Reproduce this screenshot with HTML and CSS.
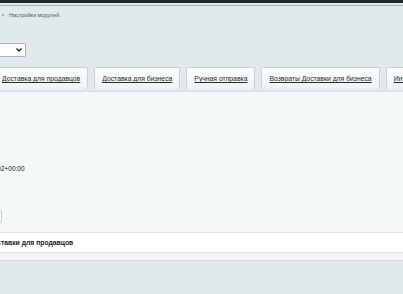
FILE: index.html
```html
<!DOCTYPE html>
<html lang="ru">
<head>
    <meta charset="UTF-8">
    <title>Настройки модулей</title>
    <link rel="stylesheet" href="styles.css">
</head>
<body>

<div class="topbar"></div>
<div class="topline"></div>

<div class="page">
    <!-- breadcrumbs -->
    <div class="crumbs">
        <span class="dot"></span>
        <a href="#">Настройки модулей</a>
    </div>

    <!-- module select -->
    <div class="select-box">
        <span class="select-val">Доставка</span>
        <svg class="chev" width="6" height="4" viewBox="0 0 6 4"><path d="M0.5 0.5 L3 3 L5.5 0.5" fill="none" stroke="#222" stroke-width="1.4"/></svg>
    </div>

    <!-- tabs -->
    <div class="tabs">
        <div class="tab first"><a href="#">Доставка для продавцов</a></div>
        <div class="tab"><a href="#">Доставка для бизнеса</a></div>
        <div class="tab"><a href="#">Ручная отправка</a></div>
        <div class="tab"><a href="#">Возвраты Доставки для бизнеса</a></div>
        <div class="tab"><a href="#">Интеграция</a></div>
    </div>

    <div class="panel">
        <div class="value">2024-06-18T09:41:02+00:00</div>
        <div class="btn-row"><span class="btn">Сохранить</span></div>
        <div class="section">Настройки доставки для продавцов</div>
        <div class="panel-foot"></div>
    </div>
</div>

</body>
</html>
```

FILE: styles.css
```css
body {
    font-family: "Liberation Sans", Arial, sans-serif;
    background: #e1e9eb;
    color: #222;
    margin: 0;
    padding: 0;
    overflow: hidden;
}
.topbar {
    height: 3px;
    background: #1d2a30;
}
.topline {
    height: 1px;
    margin-top: 2px;
    background: #a3acaf;
}
.page {
    padding-top: 5px;
}
.crumbs {
    font-size: 5.5px;
    height: 8px;
    line-height: 8px;
    display: flex;
    align-items: center;
    gap: 5px;
    padding-left: 2px;
}
.crumbs a {
    color: #3f5b70;
    text-decoration: none;
}
.dot {
    width: 2px;
    height: 2px;
    border-radius: 1px;
    background: #8aa0ad;
}
.select-box {
    margin-top: 24px;
    margin-left: -46px;
    width: 63px;
    height: 12px;
    background: #fff;
    border: 1px solid #a8b4b8;
    border-radius: 2px;
    display: flex;
    align-items: center;
    justify-content: space-between;
    padding: 0 3px 0 4px;
    box-sizing: content-box;
    font-size: 7px;
}
.chev {
    display: block;
}
.tabs {
    display: flex;
    gap: 6px;
    margin-top: 10px;
    margin-left: -6px;
    white-space: nowrap;
}
.tab {
    height: 21px;
    padding: 0 7px;
    background: linear-gradient(#fbfcfc, #eef2f3);
    border: 1px solid #c9d2d5;
    border-bottom: none;
    border-radius: 2px 2px 0 0;
    font-size: 6.8px;
    line-height: 21px;
    flex-shrink: 0;
}
.tab a {
    color: #2a2a2a;
}
.panel {
    margin-top: 2px;
    background: #f4f8f8;
    border-top: 1px solid #d7e0e2;
    height: 169px;
    display: flex;
    flex-direction: column;
}
.value {
    font-size: 6.5px;
    margin-top: 73px;
    margin-left: -58px;
    white-space: nowrap;
}
.btn-row {
    margin-top: 30px;
    margin-left: -60px;
}
.btn {
    display: inline-block;
    width: 60px;
    height: 11px;
    background: #fff;
    border: 1px solid #c2cacd;
    border-radius: 2px;
    font-size: 6px;
    color: #fff;
}
.section {
    margin-top: 9px;
    height: 19px;
    line-height: 19px;
    background: #fff;
    border-top: 1px solid #dfe3e4;
    border-bottom: 1px solid #dfe3e4;
    font-size: 6.8px;
    font-weight: bold;
    margin-left: -49px;
    white-space: nowrap;
}
.panel-foot {
    flex: 1;
    background: #f1f5f5;
    border-bottom: 1px solid #d4dcde;
}
```
